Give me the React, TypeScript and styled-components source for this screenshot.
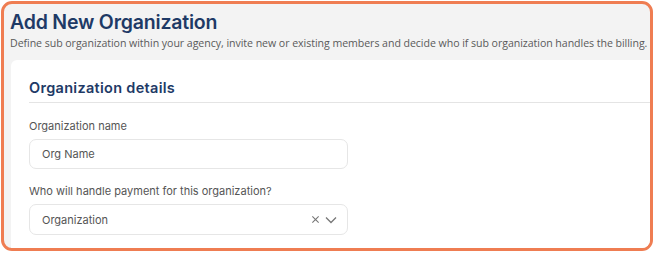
import styled, { createGlobalStyle } from "styled-components";

const Global = createGlobalStyle`
    html, body {
        margin: 0;
        padding: 0;
        background: #ffffff;
    }
    * {
        box-sizing: border-box;
    }
`;

const Frame = styled.div`
    width: 655px;
    height: 253px;
    padding: 1px 2px 2px 1px;
`;

const Panel = styled.div`
    height: 100%;
    border: 3px solid #ef7d52;
    border-radius: 11px;
    background: #f3f3f3;
    overflow: hidden;
    display: flex;
    flex-direction: column;
`;

const Header = styled.div`
    height: 56px;
    padding: 5px 0 0 6px;
    display: flex;
    flex-direction: column;
`;

const Title = styled.h1`
    margin: 0;
    font-family: "Inter", "Noto Sans", sans-serif;
    font-weight: 600;
    font-size: 19.5px;
    line-height: 26px;
    color: #1e3a66;
    letter-spacing: -0.2px;
`;

const Subtitle = styled.div`
    font-family: "Open Sans", sans-serif;
    font-size: 10.6px;
    line-height: 16px;
    color: #5a5a5a;
    white-space: nowrap;
    letter-spacing: -0.05px;
`;

const Card = styled.div`
    flex: 1;
    margin-left: 7px;
    background: #ffffff;
    border-top-left-radius: 6px;
    padding: 18px 0 0 18px;
    display: flex;
    flex-direction: column;
`;

const SectionTitle = styled.h2`
    margin: 0;
    font-family: "Inter", "Noto Sans", sans-serif;
    font-weight: 600;
    font-size: 14.5px;
    line-height: 20px;
    color: #1e3a66;
    letter-spacing: 0.3px;
    padding-bottom: 4px;
    border-bottom: 1px solid #e4e4e4;
`;

const Field = styled.div<{ $top: number }>`
    margin-top: ${(p) => p.$top}px;
    display: flex;
    flex-direction: column;
    gap: 6px;
`;

const Label = styled.label`
    font-family: "Inter", "Noto Sans", sans-serif;
    font-size: 11px;
    line-height: 14px;
    color: #555555;
`;

const Box = styled.div<{ $h: number }>`
    width: 319px;
    height: ${(p) => p.$h}px;
    border: 1px solid #e6e6e6;
    border-radius: 7px;
    padding: 0 10px 0 12px;
    display: flex;
    align-items: center;
    font-family: "Inter", "Noto Sans", sans-serif;
    font-size: 11px;
    color: #555555;
`;

const Value = styled.span`
    flex: 1;
`;

const Icons = styled.div`
    display: flex;
    align-items: center;
    gap: 5px;
    color: #777777;
`;

export default function App() {
    return (
        <Frame>
            <Global />
            <Panel>
                <Header>
                    <Title>Add New Organization</Title>
                    <Subtitle>
                        Define sub organization within your agency, invite new or existing members and decide who if sub organization handles the billing.
                    </Subtitle>
                </Header>
                <Card>
                    <SectionTitle>Organization details</SectionTitle>
                    <Field $top={16}>
                        <Label>Organization name</Label>
                        <Box $h={30}>
                            <Value>Org Name</Value>
                        </Box>
                    </Field>
                    <Field $top={15}>
                        <Label>Who will handle payment for this organization?</Label>
                        <Box $h={31}>
                            <Value>Organization</Value>
                            <Icons>
                                <svg width="9" height="9" viewBox="0 0 10 10">
                                    <path d="M1.5 1.5 L8.5 8.5 M8.5 1.5 L1.5 8.5" stroke="currentColor" strokeWidth="1.2" fill="none" />
                                </svg>
                                <svg width="12" height="8" viewBox="0 0 12 8">
                                    <path d="M1 1.5 L6 6.5 L11 1.5" stroke="currentColor" strokeWidth="1.3" fill="none" />
                                </svg>
                            </Icons>
                        </Box>
                    </Field>
                </Card>
            </Panel>
        </Frame>
    );
}
